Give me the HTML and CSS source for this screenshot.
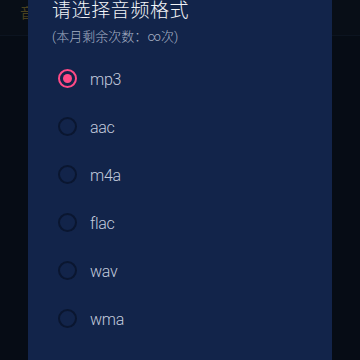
FILE: index.html
```html
<!DOCTYPE html>
<html lang="zh">
<head>
    <meta charset="UTF-8">
    <meta name="viewport" content="width=device-width, initial-scale=1.0">
    <title>音频格式</title>
    <link rel="stylesheet" href="styles.css">
</head>
<body>
    <div class="page">
        <div class="topbar"><span class="topbar-text">音</span></div>
    </div>
    <div class="dialog">
        <h1 class="dialog-title">请选择音频格式</h1>
        <p class="dialog-sub">(本月剩余次数：∞次)</p>
        <ul class="options">
            <li class="option"><span class="radio checked"></span><span class="label">mp3</span></li>
            <li class="option"><span class="radio"></span><span class="label">aac</span></li>
            <li class="option"><span class="radio"></span><span class="label">m4a</span></li>
            <li class="option"><span class="radio"></span><span class="label">flac</span></li>
            <li class="option"><span class="radio"></span><span class="label">wav</span></li>
            <li class="option"><span class="radio"></span><span class="label">wma</span></li>
        </ul>
    </div>
</body>
</html>
```
FILE: styles.css
```css
body {
    margin: 0;
    padding: 0;
    background-color: #060c15;
    font-family: Roboto, "Noto Sans CJK SC", sans-serif;
    height: 360px;
    overflow: hidden;
}
.page {
    height: 360px;
}
.topbar {
    height: 36px;
    background-color: #080e17;
    border-bottom: 1px solid #0c1420;
    padding-left: 20px;
    box-sizing: border-box;
}
.topbar-text {
    color: #4a4220;
    font-size: 14px;
    line-height: 26px;
}
.dialog {
    position: absolute;
    top: 0;
    left: 28px;
    width: 304px;
    height: 360px;
    background-color: #12244a;
    padding-left: 24px;
    box-sizing: border-box;
}
.dialog-title {
    margin: 0;
    font-size: 19px;
    font-weight: 300;
    line-height: 22px;
    color: #f2f4f8;
    letter-spacing: 0.6px;
}
.dialog-sub {
    margin: 6px 0 0;
    font-size: 13px;
    font-weight: 300;
    line-height: 18px;
    color: #a6b0c4;
}
.options {
    list-style: none;
    margin: 8px 0 0;
    padding: 0 0 0 6px;
}
.option {
    display: flex;
    align-items: center;
    height: 48px;
    gap: 13px;
}
.radio {
    width: 19px;
    height: 19px;
    border: 2px solid #0a1630;
    border-radius: 50%;
    box-sizing: border-box;
    display: flex;
    align-items: center;
    justify-content: center;
}
.radio.checked {
    border-color: #ff4a86;
}
.radio.checked::after {
    content: "";
    width: 9px;
    height: 9px;
    border-radius: 50%;
    background-color: #ff4a86;
}
.label {
    font-size: 16px;
    font-weight: 300;
    letter-spacing: -0.3px;
    padding-top: 3px;
    color: #c3cbdd;
}
```
